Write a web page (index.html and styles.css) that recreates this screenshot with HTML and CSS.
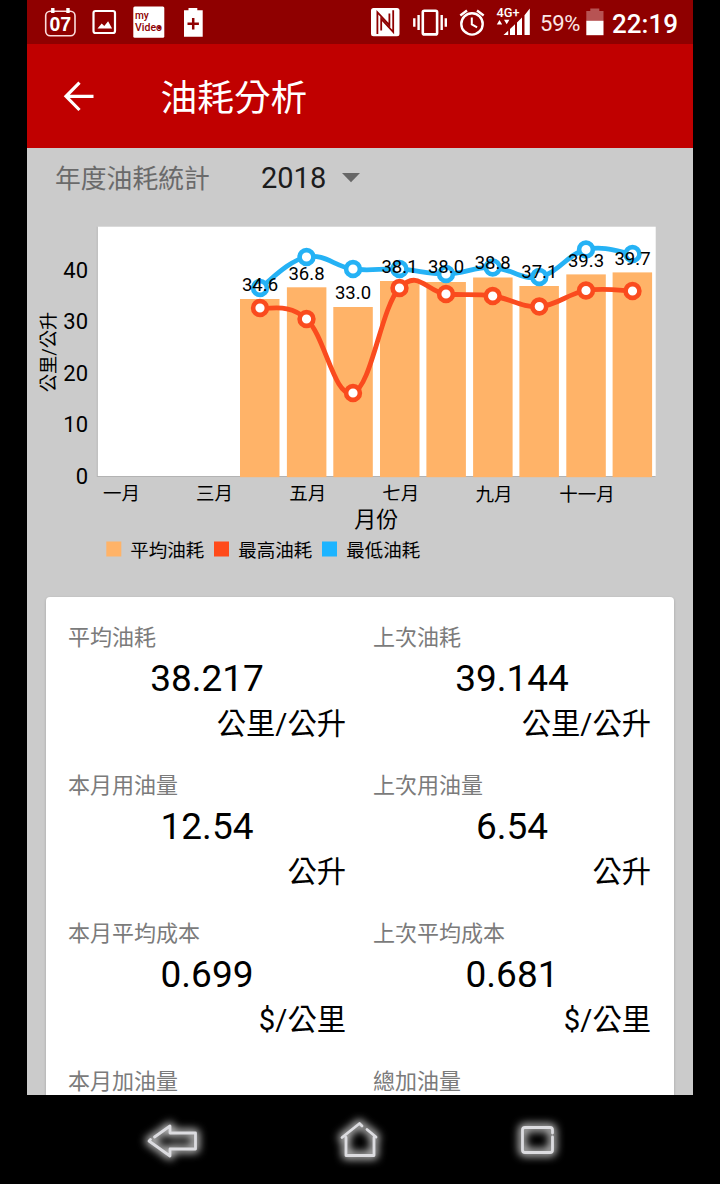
FILE: index.html
```
<!DOCTYPE html>
<html lang="zh-Hant">
<head>
<meta charset="utf-8">
<title>油耗分析</title>
<link rel="stylesheet" href="styles.css">
</head>
<body>
<div class="screen">
  <div class="status">
    <svg class="status-left" width="190" height="44" viewBox="30 0 190 44">
      <rect x="45.7" y="11.2" width="29.3" height="24.5" rx="4.5" fill="none" stroke="#fbdcdc" stroke-width="1.6"/>
      <path d="M52.8 8v5M68 8v5" stroke="#fff" stroke-width="3.4"/>
      <text class="cal" x="60.3" y="30.8" text-anchor="middle">07</text>
      <rect x="93.5" y="11" width="21.5" height="22" rx="2" fill="none" stroke="#fff" stroke-width="2.2"/>
      <path d="M97.5 28.5l4.2-5 2.6 2.4 3.8-4.6 4 7.2z" fill="#fff"/>
      <rect x="133.3" y="6.5" width="31" height="31.3" rx="1.5" fill="#fff"/>
      <text class="mv" x="135" y="19.3">my</text>
      <text class="mv" x="135" y="30.6" textLength="27" lengthAdjust="spacingAndGlyphs">Video</text>
      <circle cx="159.3" cy="27.6" r="1.6" fill="#8f0000"/>
      <path d="M184 10.3h4.5V8h8.8v2.3h5.4v26.5H184z" fill="#fff"/>
      <path d="M193.2 18v11.4M187.5 23.7h11.4" stroke="#8f0000" stroke-width="2.5"/>
    </svg>
    <div class="status-right">
      <svg width="163" height="44" viewBox="370 0 163 44">
        <rect x="372" y="8" width="28.5" height="28.3" rx="2.5" fill="#fff"/>
        <path d="M378.4 34V12.2L390.4 25.2V13.5M382.2 30.5V19L394.2 32V10.2" fill="none" stroke="#8f0000" stroke-width="1.8"/>
        <rect x="423.8" y="10.8" width="14.3" height="23.6" rx="1.5" fill="none" stroke="#fff" stroke-width="2.6"/>
        <path d="M419.6 15v15M442.7 15v15M415.3 18.2v8.6M446.8 18.2v8.6" stroke="#fff" stroke-width="2.4"/>
        <circle cx="473" cy="23.9" r="10.7" fill="none" stroke="#fff" stroke-width="2.4"/>
        <path d="M472.8 17.5v6.8l5.3 3" fill="none" stroke="#fff" stroke-width="2"/>
        <path d="M461.3 15.5l6.7-5M478 10.5l6.7 5" stroke="#fff" stroke-width="2.4"/>
        <text class="net" x="497.5" y="17.3">4G+</text>
        <path d="M497.8 24.4l2.7-4.4 2.7 4.4zM505 19.8h5.4l-2.7 4.4zM504.5 35l4.7-4.2V35zM511 29l5-4.7V35h-5zM518 22.4l5-4.8V35h-5zM525.5 15.2l5.3-6.7V35h-5.3z" fill="#fff"/>
      </svg>
      <span class="percent">59%</span>
      <svg class="battery" width="18" height="28" viewBox="0 0 18 28">
        <path d="M.3 3h4V.5h9V3h4.2v10H.3z" fill="#b75353"/><path d="M.3 12.8h17.2v14.4H.3z" fill="#fff"/>
      </svg>
      <span class="clock">22:19</span>
    </div>
  </div>
  <header class="toolbar">
    <svg class="back" width="32" height="32" viewBox="0 0 32 32"><path d="M30.5 16.3H3.5M16.5 2.6L3 16.3 16.5 30" fill="none" stroke="#fff" stroke-width="3.2"/></svg>
    <h1 class="title">油耗分析</h1>
  </header>
  <div class="filter">
    <span class="filter-label">年度油耗統計</span>
    <span class="year">2018</span>
    <svg width="18" height="10" viewBox="0 0 18 10"><path d="M0 0h18l-9 9.3z" fill="#676767"/></svg>
  </div>
  <svg class="chart" width="666" height="362" viewBox="27 208 666 362">
    <rect x="97" y="226.7" width="558.7" height="250" fill="#fff"/>
    <path d="M97.3 226.5V477M97 476.5h558.7" fill="none" stroke="#b3b3b3" stroke-width="1"/>
    <g fill="#ffb368">
      <rect x="240" y="299" width="39.5" height="178.2"/><rect x="286.9" y="287.3" width="39.5" height="189.9"/>
      <rect x="333.3" y="307" width="39.5" height="170.2"/><rect x="380" y="281" width="39.5" height="196.2"/>
      <rect x="426.4" y="282" width="39.5" height="195.2"/><rect x="473.1" y="277.5" width="39.5" height="199.7"/>
      <rect x="519.4" y="286" width="39.5" height="191.2"/><rect x="566.3" y="274.4" width="39.5" height="202.8"/>
      <rect x="612.6" y="272.4" width="39.5" height="204.8"/>
    </g>
    <path class="line low" d="M260 288C269.3 281.8 287.9 260.8 306.5 257S334.4 266.6 353 269S380.9 268 399.5 269S427.4 274.3 446 274S474.1 266.9 492.7 267.5S520.7 280.6 539.3 277S567.4 254.1 586 249.5S623.2 253.1 632.5 254"/>
    <g class="dots low">
      <circle cx="260" cy="288" r="6.9"/><circle cx="306.5" cy="257" r="6.9"/><circle cx="353" cy="269" r="6.9"/><circle cx="399.5" cy="269" r="6.9"/><circle cx="446" cy="274" r="6.9"/><circle cx="492.7" cy="267.5" r="6.9"/><circle cx="539.3" cy="277" r="6.9"/><circle cx="586" cy="249.5" r="6.9"/><circle cx="632.5" cy="254" r="6.9"/>
    </g>
    <path class="line high" d="M260 308C269.3 310.2 287.9 302 306.5 319S334.4 399.2 353 393S380.9 307.8 399.5 288S427.4 292.4 446 294S474.1 293.5 492.7 296S520.7 307.6 539.3 306.5S567.4 293.6 586 290.5S623.2 290.9 632.5 291"/>
    <g class="dots high">
      <circle cx="260" cy="308" r="6.9"/><circle cx="306.5" cy="319" r="6.9"/><circle cx="353" cy="393" r="6.9"/><circle cx="399.5" cy="288" r="6.9"/><circle cx="446" cy="294" r="6.9"/><circle cx="492.7" cy="296" r="6.9"/><circle cx="539.3" cy="306.5" r="6.9"/><circle cx="586" cy="290.5" r="6.9"/><circle cx="632.5" cy="291" r="6.9"/>
    </g>
    <g class="small mid">
      <text x="260" y="290.5">34.6</text><text x="306.5" y="279.5">36.8</text><text x="353" y="298.5">33.0</text><text x="399.5" y="272.7">38.1</text><text x="446" y="273.3">38.0</text><text x="492.7" y="268.7">38.8</text><text x="539.3" y="277.7">37.1</text><text x="586" y="266.5">39.3</text><text x="632.5" y="264.7">39.7</text>
      <text x="121.5" y="500">一月</text><text x="214.4" y="500">三月</text><text x="307.7" y="500">五月</text><text x="400.7" y="500">七月</text><text x="493.9" y="500.5">九月</text><text x="587" y="500.5">十一月</text>
    </g>
    <g class="axis end">
      <text x="88" y="277.5">40</text><text x="88" y="329">30</text><text x="88" y="380.8">20</text><text x="88" y="432.3">10</text><text x="88" y="483.8">0</text>
    </g>
    <text class="unit-y" transform="translate(54.5 352) rotate(-90)">公里/公升</text>
    <text class="axis mid" x="376.3" y="527">月份</text>
    <rect x="106.3" y="541.5" width="15" height="15" fill="#ffb368"/><text class="small" x="130.3" y="557">平均油耗</text>
    <rect x="214" y="541.5" width="15" height="15" fill="#ff4a1a"/><text class="small" x="238.3" y="557">最高油耗</text>
    <rect x="322" y="541.5" width="15" height="15" fill="#1cb4ff"/><text class="small" x="346.3" y="557">最低油耗</text>
  </svg>
  <main class="card">
    <section class="stat"><div class="label">平均油耗</div><div class="value">38.217</div><div class="unit">公里/公升</div></section>
    <section class="stat"><div class="label">上次油耗</div><div class="value">39.144</div><div class="unit">公里/公升</div></section>
    <section class="stat"><div class="label">本月用油量</div><div class="value">12.54</div><div class="unit">公升</div></section>
    <section class="stat"><div class="label">上次用油量</div><div class="value">6.54</div><div class="unit">公升</div></section>
    <section class="stat"><div class="label">本月平均成本</div><div class="value">0.699</div><div class="unit">$/公里</div></section>
    <section class="stat"><div class="label">上次平均成本</div><div class="value">0.681</div><div class="unit">$/公里</div></section>
    <section class="stat"><div class="label">本月加油量</div></section>
    <section class="stat"><div class="label">總加油量</div></section>
  </main>
</div>
<nav class="navbar">
  <svg width="720" height="89" viewBox="0 1095 720 89">
    <defs><filter id="glow" x="-60%" y="-60%" width="220%" height="220%"><feGaussianBlur stdDeviation="4.5"/></filter>
    <g id="keys" fill="none" stroke-linecap="round" stroke-linejoin="round">
      <path d="M154.5 1137L170 1126v7h25.5v16H170v7l-21-15 1.5-1.5"/>
      <path d="M362 1126l-2.5-2.5-17.5 14M367 1129.5l9 7.5M346 1137.5V1155.5h28V1137.5"/>
      <path d="M552.5 1133v-3q0-2.5-2.5-2.5h-25q-2.5 0-2.5 2.5v20q0 2.5 2.5 2.5h25q2.5 0 2.5-2.5v-13"/>
    </g></defs>
    <use href="#keys" stroke="#d8d8d8" stroke-width="7" filter="url(#glow)"/>
    <use href="#keys" stroke="#dcdce0" stroke-width="2.8"/>
  </svg>
</nav>
</body>
</html>
```
FILE: styles.css
```
* { box-sizing: border-box; }
body {
  margin: 0;
  width: 720px;
  height: 1184px;
  overflow: hidden;
  background: #000;
  color: #000;
  font-family: Roboto, "Noto Sans CJK TC", sans-serif;
}
.screen {
  width: 666px;
  height: 1095px;
  margin-left: 27px;
  background: #cbcbcb;
  overflow: hidden;
  display: flex;
  flex-direction: column;
}
.status {
  flex: none;
  height: 44px;
  padding: 0 15px 0 3px;
  background: #8f0000;
  color: #fff;
  display: flex;
  justify-content: space-between;
}
.status-right { display: flex; align-items: center; }
.percent { margin-left: 8px; width: 46px; font-size: 22px; line-height: 24px; padding-top: 3px; color: #fbe6e6; letter-spacing: -.2px; }
.battery { margin-right: 8px; }
.clock { font-size: 26px; font-weight: 500; line-height: 28px; padding-top: 3px; width: 66px; white-space: nowrap; }
.cal { font: 700 19.5px "Liberation Sans", sans-serif; fill: #fff; }
.mv { font: 500 10.2px Roboto, sans-serif; fill: #8f0000; }
.net { font: 500 12.8px Roboto, sans-serif; fill: #fff; }

.toolbar {
  flex: none;
  height: 104px;
  padding-left: 36px;
  background: #c00000;
  display: flex;
  align-items: center;
  gap: 65.5px;
}
.title { margin: 0; padding-top: 6px; font-size: 36.7px; font-weight: 400; line-height: 50px; color: #fff; }

.filter {
  flex: none;
  height: 60px;
  padding-left: 28px;
  display: flex;
  align-items: center;
}
.filter-label { width: 206px; padding-top: 2px; font-size: 25.8px; line-height: 36px; color: #6a6a6a; }
.year { width: 81px; font-size: 29px; line-height: 36px; color: #1c1c1c; }

.chart { flex: none; display: block; }
.small { font-size: 18.5px; }
.axis { font-size: 22px; }
.mid { text-anchor: middle; }
.end { text-anchor: end; }
.unit-y { font-size: 18.3px; text-anchor: middle; }
.line { fill: none; stroke-width: 4.8; }
.line.low, .dots.low { stroke: #25b2f5; }
.line.high, .dots.high { stroke: #fa4b1e; }
.dots { fill: #fff; stroke-width: 4.6; }

.card {
  flex: none;
  width: 628.5px;
  height: 560px;
  margin: 27px 0 0 18.5px;
  padding: 25px 22.5px 0;
  background: #fff;
  border-radius: 4px;
  box-shadow: 0 1px 3px rgba(0, 0, 0, .2);
  display: grid;
  grid-template-columns: 278px 278px;
  grid-auto-rows: 120px;
  gap: 28px 27px;
}
.label { font-size: 22px; line-height: 32px; color: #7b7b7b; }
.value { font-size: 37px; line-height: 50px; text-align: center; }
.unit { font-size: 29.3px; line-height: 40px; text-align: right; }
.navbar { height: 89px; }
.navbar svg { display: block; }
```
